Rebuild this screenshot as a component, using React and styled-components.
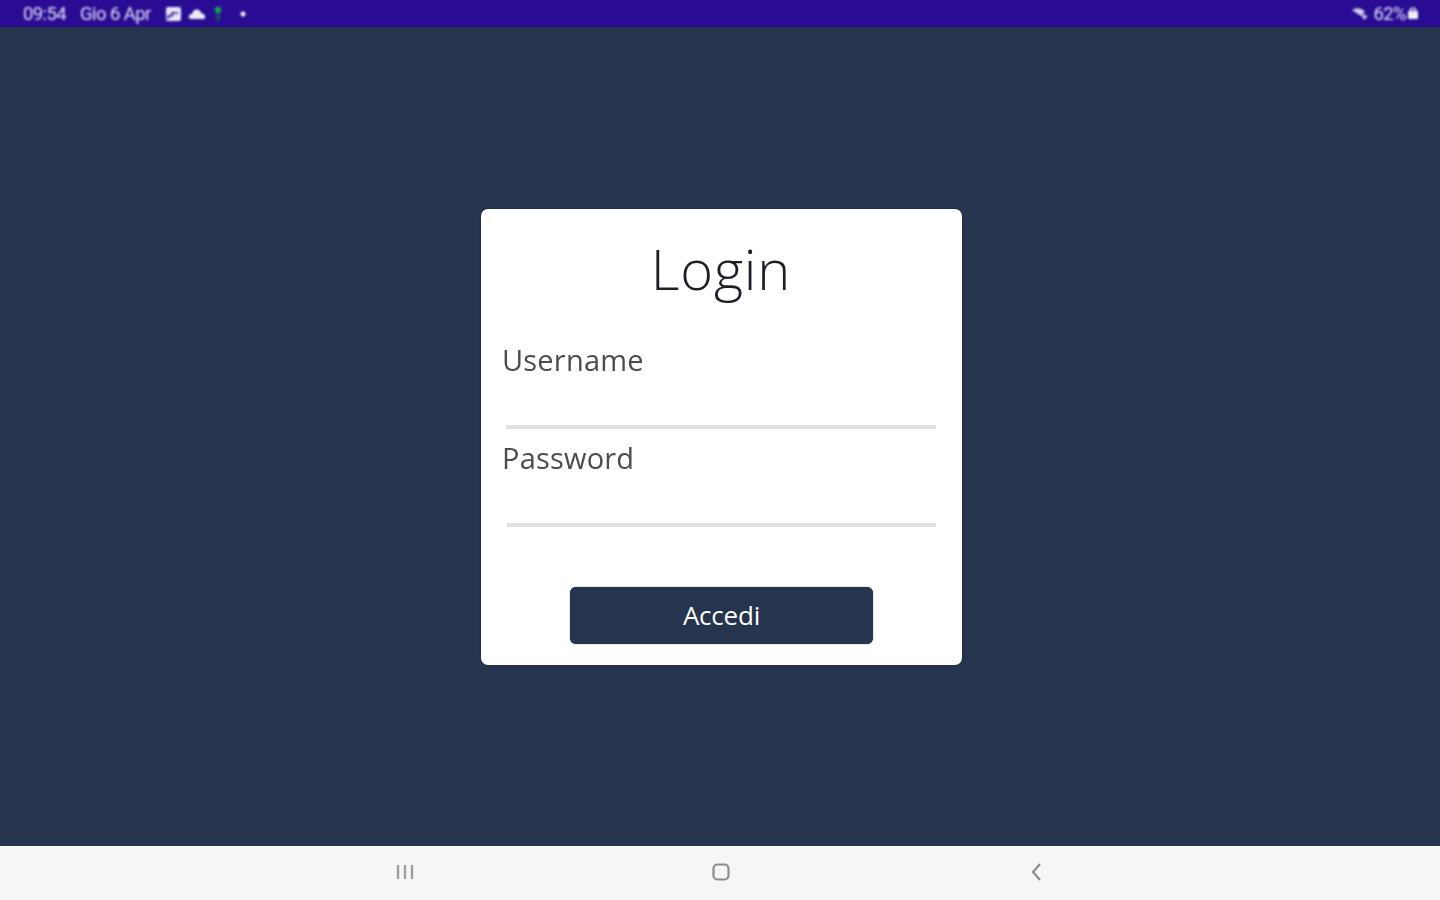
import React from 'react';
import styled, { createGlobalStyle } from 'styled-components';

const GlobalStyle = createGlobalStyle`
  html, body {
    margin: 0;
    height: 100%;
    background: #26344d;
    font-family: "Open Sans", "Liberation Sans", sans-serif;
  }
  #root {
    height: 100%;
  }
`;

const Screen = styled.div`
  width: 1440px;
  height: 900px;
  display: flex;
  flex-direction: column;
  overflow: hidden;
`;

const StatusBar = styled.div`
  height: 27px;
  flex-shrink: 0;
  display: flex;
  justify-content: space-between;
  align-items: center;
  padding: 0 21px 0 23px;
  background: #2a0c94;
  color: #e2dff5;
  font-family: "Roboto", sans-serif;
  font-size: 18.5px;
  letter-spacing: -0.6px;
`;

const StatusGroup = styled.div`
  display: flex;
  align-items: center;
  filter: blur(0.8px);
`;

const StatusText = styled.span`
  margin-right: ${(p) => p.$gap || 0}px;
`;

const StatusIcon = styled.svg`
  display: block;
  margin-right: ${(p) => p.$gap || 0}px;
`;

const Main = styled.main`
  flex: 1;
  display: flex;
  justify-content: center;
  align-items: center;
  padding-left: 3px;
  background: #26344d;
`;

const Card = styled.form`
  width: 481px;
  height: 456px;
  box-sizing: border-box;
  padding: 25px 26px 0 21px;
  display: flex;
  flex-direction: column;
  background: #fff;
  border-radius: 7px;
  box-shadow: 0 0 2px rgba(10, 20, 40, 0.7);
`;

const Title = styled.h1`
  margin: 0 0 0 4px;
  height: 68px;
  font-size: 56px;
  line-height: 68px;
  font-weight: 350;
  letter-spacing: 0.8px;
  text-align: center;
  color: #1c1f26;
`;

const Field = styled.label`
  display: flex;
  flex-direction: column;
  margin-top: ${(p) => p.$top}px;
`;

const FieldLabel = styled.span`
  height: 40px;
  font-size: 29px;
  line-height: 40px;
  letter-spacing: 0.2px;
  color: #4a4d52;
  filter: blur(0.3px);
`;

const FieldInput = styled.input`
  height: 45px;
  box-sizing: content-box;
  margin-left: ${(p) => p.$inset}px;
  padding: 0;
  border: 0;
  border-bottom: 4px solid #e2e2e2;
  outline: none;
  background: transparent;
`;

const SubmitButton = styled.button`
  align-self: center;
  width: 303px;
  height: 57px;
  margin: 60px 0 0 5px;
  border: 0;
  border-radius: 6px;
  background: #26344d;
  box-shadow: 0 0 1px #0c1a36;
  color: #fff;
  font-family: inherit;
  font-size: 26px;
  letter-spacing: -0.2px;
`;

const NavBar = styled.nav`
  height: 54px;
  flex-shrink: 0;
  box-sizing: border-box;
  display: grid;
  grid-template-columns: 48px 48px 48px;
  justify-content: center;
  column-gap: 268px;
  align-items: center;
  background: #f6f6f6;
  border-top: 1px solid #fbfbfb;
  padding: 0 0 4px 2px;
`;

const NavSlot = styled.div`
  display: flex;
  justify-content: center;
  align-items: center;
  filter: blur(0.5px);
`;

export default function App() {
  return (
    <Screen>
      <GlobalStyle />
      <StatusBar>
        <StatusGroup>
          <StatusText $gap={14}>09:54</StatusText>
          <StatusText $gap={14}>Gio 6 Apr</StatusText>
          <StatusIcon $gap={6} width="17" height="16" viewBox="0 0 17 16">
            <rect x="1" y="1" width="15" height="14" rx="2" fill="#e8e6f6" />
            <path d="M3 13 L3 10 L7 10 L7 7 L13 7" fill="none" stroke="#2a0c94" strokeWidth="1.6" />
          </StatusIcon>
          <StatusIcon $gap={7} width="18" height="12" viewBox="0 0 18 12">
            <path d="M4 11 C1 11 0 9 1 7.5 C2 6 3 6 4 6 C4.5 3 7 1 9.5 1.5 C12 2 13 4 13.5 5.5 C16 5.5 18 8 17 10 C16.5 11 15.5 11 14.5 11 Z" fill="#eeecf8" />
          </StatusIcon>
          <StatusIcon $gap={17} width="10" height="18" viewBox="0 0 10 18">
            <circle cx="5" cy="5" r="3.2" fill="#1aa34a" />
            <rect x="3" y="9" width="4" height="7" rx="1" fill="#1e4a6a" />
          </StatusIcon>
          <StatusIcon width="6" height="6" viewBox="0 0 6 6">
            <circle cx="3" cy="3" r="2.5" fill="#f0eef9" />
          </StatusIcon>
        </StatusGroup>
        <StatusGroup>
          <StatusIcon $gap={2} width="20" height="14" viewBox="0 0 20 14">
            <path d="M1 3 C6 0 11 1 14 5 L10 9 Z" fill="#cfcbea" />
            <path d="M10 7 L17 9 L13 13 Z" fill="#cfcbea" />
          </StatusIcon>
          <StatusText $gap={1}>62%</StatusText>
          <StatusIcon width="12" height="13" viewBox="0 0 12 13">
            <rect x="1" y="4" width="10" height="8" rx="1" fill="#f0eef9" />
            <path d="M3.5 4 V3 C3.5 0.8 8.5 0.8 8.5 3 V4" fill="none" stroke="#f0eef9" strokeWidth="1.5" />
          </StatusIcon>
        </StatusGroup>
      </StatusBar>

      <Main>
        <Card onSubmit={(e) => e.preventDefault()}>
          <Title>Login</Title>
          <Field $top={38}>
            <FieldLabel>Username</FieldLabel>
            <FieldInput $inset={4} type="text" />
          </Field>
          <Field $top={9}>
            <FieldLabel>Password</FieldLabel>
            <FieldInput $inset={5} type="password" />
          </Field>
          <SubmitButton type="submit">Accedi</SubmitButton>
        </Card>
      </Main>

      <NavBar>
        <NavSlot>
          <svg width="20" height="16" viewBox="0 0 20 16" fill="none" stroke="#a0a0a0" strokeWidth="2.4">
            <path d="M3 1 V15 M10 1 V15 M17 1 V15" />
          </svg>
        </NavSlot>
        <NavSlot>
          <svg width="20" height="20" viewBox="0 0 20 20" fill="none" stroke="#8c8c8c" strokeWidth="2.2">
            <rect x="2.5" y="2.5" width="15" height="15" rx="4" />
          </svg>
        </NavSlot>
        <NavSlot>
          <svg width="14" height="20" viewBox="0 0 14 20" fill="none" stroke="#8c8c8c" strokeWidth="2.2">
            <path d="M10 2 L3 10 L10 18" />
          </svg>
        </NavSlot>
      </NavBar>
    </Screen>
  );
}
